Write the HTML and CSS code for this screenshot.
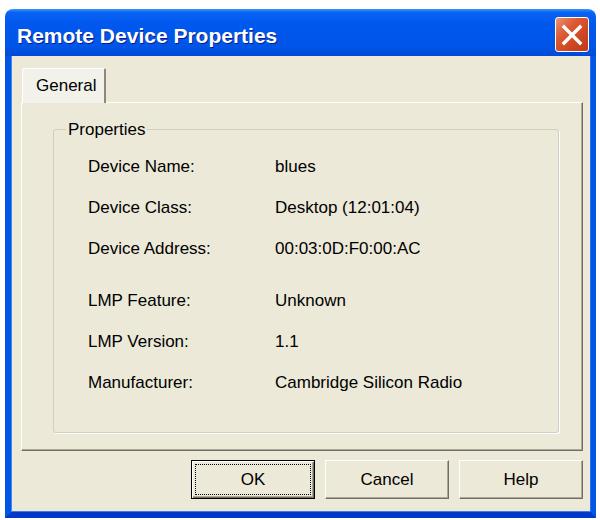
FILE: index.html
```html
<!DOCTYPE html>
<html lang="en">
<head>
    <meta charset="UTF-8">
    <meta name="viewport" content="width=device-width, initial-scale=1.0">
    <title>Remote Device Properties</title>
    <link rel="stylesheet" href="styles.css">
</head>
<body>
    <div class="window">
        <div class="titlebar">
            <span class="title">Remote Device Properties</span>
            <button class="close" aria-label="Close">
                <svg width="32" height="33" viewBox="0 0 32 33">
                    <path d="M8 9 L24 25 M24 9 L8 25" stroke="#fff" stroke-width="3.4" stroke-linecap="square"/>
                </svg>
            </button>
        </div>

        <div class="client">
            <div class="tabs">
                <div class="tab">General</div>
            </div>

            <div class="panel">
                <fieldset class="group">
                    <legend>Properties</legend>
                    <div class="props">
                        <div class="row"><span>Device Name:</span><span>blues</span></div>
                        <div class="row"><span>Device Class:</span><span>Desktop (12:01:04)</span></div>
                        <div class="row"><span>Device Address:</span><span>00:03:0D:F0:00:AC</span></div>
                        <div class="row spaced"><span>LMP Feature:</span><span>Unknown</span></div>
                        <div class="row"><span>LMP Version:</span><span>1.1</span></div>
                        <div class="row"><span>Manufacturer:</span><span>Cambridge Silicon Radio</span></div>
                    </div>
                </fieldset>
            </div>

            <div class="buttons">
                <button class="btn default"><span class="focus">OK</span></button>
                <button class="btn"><span class="focus">Cancel</span></button>
                <button class="btn"><span class="focus">Help</span></button>
            </div>
        </div>
    </div>
</body>
</html>
```

FILE: styles.css
```css
body {
    margin: 0;
    background: #fff;
    font-family: 'Liberation Sans', Arial, sans-serif;
    font-size: 17px;
    color: #000;
}
.window {
    margin: 9px 0 0 5px;
    width: 591px;
    height: 509px;
    display: flex;
    flex-direction: column;
}
.titlebar {
    height: 47px;
    flex: none;
    display: flex;
    justify-content: space-between;
    align-items: flex-start;
    border-radius: 8px 8px 0 0;
    background: linear-gradient(to bottom, #3d95ff 0, #0a63f4 7%, #0058ee 30%, #0055e8 80%, #0049d6 100%);
}
.title {
    margin: 15px 0 0 12px;
    line-height: 24px;
    font-size: 21px;
    font-weight: bold;
    color: #fff;
    text-shadow: 1px 1px 0 #0a1e8a;
}
.close {
    margin: 8px 7px 0 0;
    width: 34px;
    height: 35px;
    padding: 0;
    border: 1px solid #fff;
    border-radius: 3px;
    background: linear-gradient(135deg, #eb9376 0, #dc5a34 35%, #cc4421 70%, #bf3a1c 100%);
    display: flex;
    align-items: center;
    justify-content: center;
}
.client {
    flex: 1;
    background: #ece9d8;
    border-left: 6px solid #0055e5;
    border-right: 5px solid #0055e5;
    border-bottom: 6px solid #0339c9;
    box-shadow: inset 1px 0 #3d8cf7, inset -1px 0 #2a6fe8, inset 0 -1px #3d7ce8;
}
.tabs {
    display: flex;
    padding: 12px 0 0 11px;
}
.tab {
    width: 84px;
    height: 35px;
    box-sizing: border-box;
    padding-left: 13px;
    line-height: 34px;
    background: #f3f2ea;
    border-left: 1px solid #fff;
    border-top: 1px solid #fff;
    border-right: 2px solid #8c8a80;
    border-radius: 2px 2px 0 0;
    position: relative;
    z-index: 1;
    margin-bottom: -1px;
}
.panel {
    margin-left: 10px;
    width: 562px;
    height: 349px;
    box-sizing: border-box;
    border: 1px solid;
    border-color: #fff #716f64 #716f64 #fff;
    box-shadow: inset -1px -1px #aca899;
    padding-top: 18px;
}
.group {
    margin: 0 23px 0 31px;
    height: 312px;
    box-sizing: border-box;
    padding: 0 0 0 12px;
    border: 1px solid #d0d0bf;
    border-radius: 3px;
    box-shadow: 1px 1px 0 #fff;
}
.group legend {
    padding: 0 2px;
    line-height: 17px;
}
.props {
    margin: 19px 0 0 22px;
}
.row {
    display: grid;
    grid-template-columns: 187px 1fr;
    height: 41px;
    line-height: 20px;
}
.row.spaced {
    margin-top: 11px;
}
.buttons {
    display: flex;
    justify-content: flex-end;
    gap: 10px;
    margin-top: 9px;
    padding-right: 8px;
}
.btn {
    width: 124px;
    height: 39px;
    padding: 3px;
    font-family: inherit;
    font-size: 17px;
    background: #ece9d8;
    border: 1px solid;
    border-color: #fff #716f64 #716f64 #fff;
    box-shadow: inset -1px -1px #aca899;
}
.btn .focus {
    display: block;
    height: 100%;
    box-sizing: border-box;
    line-height: 29px;
    border: 1px dotted transparent;
}
.btn.default {
    border: 1px solid #000;
    box-shadow: inset 1px 1px #fff, inset -1px -1px #716f64, inset -2px -2px #aca899;
}
.btn.default .focus {
    border-color: #000;
}
```
